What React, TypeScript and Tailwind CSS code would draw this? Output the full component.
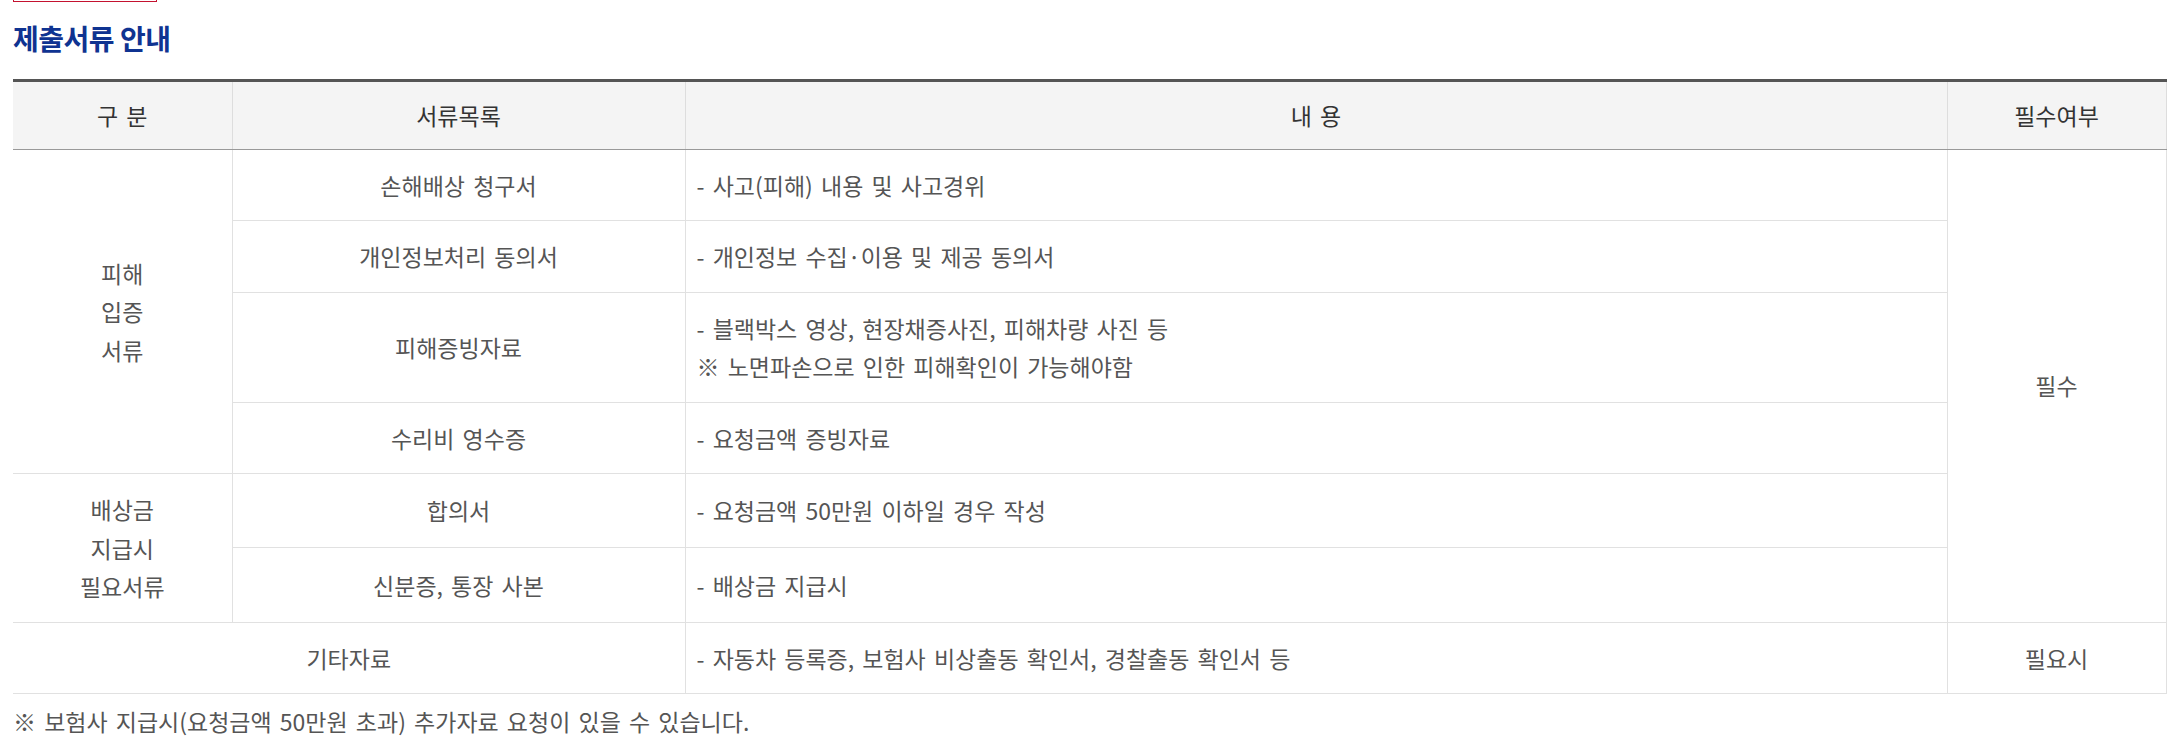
export default function App() {
  const th =
    "bg-[#f4f4f4] text-[#333] font-normal text-center py-[14px] border-b border-b-[#999] border-r border-r-[#ddd]";
  const td = "py-4 border-b border-b-[#e1e1e1] border-r border-r-[#e1e1e1] text-center align-middle";
  const tdText = "py-4 pl-[11px] border-b border-b-[#e1e1e1] border-r border-r-[#e1e1e1] text-left align-middle";

  return (
    <div className="bg-white min-h-screen pl-[13px] font-['Noto_Sans_CJK_KR',sans-serif] text-[23px] leading-[38.5px] [word-spacing:3px] text-[#555]">
      <div className="w-[144px] h-[2px] border-x border-b border-[#c4122f]" />
      <h2 className="mt-[18px] text-[28px] leading-[36px] font-bold tracking-[-0.5px] [word-spacing:0px] text-[#0f3391]">
        제출서류 안내
      </h2>

      <table className="mt-[23px] w-[2153px] table-fixed border-collapse border-t-[3px] border-t-[#555]">
        <colgroup>
          <col className="w-[219px]" />
          <col className="w-[453px]" />
          <col className="w-[1262px]" />
          <col className="w-[219px]" />
        </colgroup>
        <thead>
          <tr>
            <th className={th}>구 분</th>
            <th className={th}>서류목록</th>
            <th className={th}>내 용</th>
            <th className={th}>필수여부</th>
          </tr>
        </thead>
        <tbody>
          <tr>
            <td rowSpan={4} className={td}>
              피해
              <br />
              입증
              <br />
              서류
            </td>
            <td className={td}>손해배상 청구서</td>
            <td className={tdText}>- 사고(피해) 내용 및 사고경위</td>
            <td rowSpan={6} className={td}>
              필수
            </td>
          </tr>
          <tr>
            <td className={td}>개인정보처리 동의서</td>
            <td className={tdText}>- 개인정보 수집·이용 및 제공 동의서</td>
          </tr>
          <tr>
            <td className={td}>피해증빙자료</td>
            <td className={tdText}>
              - 블랙박스 영상, 현장채증사진, 피해차량 사진 등
              <br />※ 노면파손으로 인한 피해확인이 가능해야함
            </td>
          </tr>
          <tr>
            <td className={td}>수리비 영수증</td>
            <td className={tdText}>- 요청금액 증빙자료</td>
          </tr>
          <tr>
            <td rowSpan={2} className={td}>
              배상금
              <br />
              지급시
              <br />
              필요서류
            </td>
            <td className={td}>합의서</td>
            <td className={tdText}>- 요청금액 50만원 이하일 경우 작성</td>
          </tr>
          <tr>
            <td className={td}>신분증, 통장 사본</td>
            <td className={tdText}>- 배상금 지급시</td>
          </tr>
          <tr>
            <td colSpan={2} className={td}>
              기타자료
            </td>
            <td className={tdText}>- 자동차 등록증, 보험사 비상출동 확인서, 경찰출동 확인서 등</td>
            <td className={td}>필요시</td>
          </tr>
        </tbody>
      </table>

      <p className="mt-2">※ 보험사 지급시(요청금액 50만원 초과) 추가자료 요청이 있을 수 있습니다.</p>
    </div>
  );
}
